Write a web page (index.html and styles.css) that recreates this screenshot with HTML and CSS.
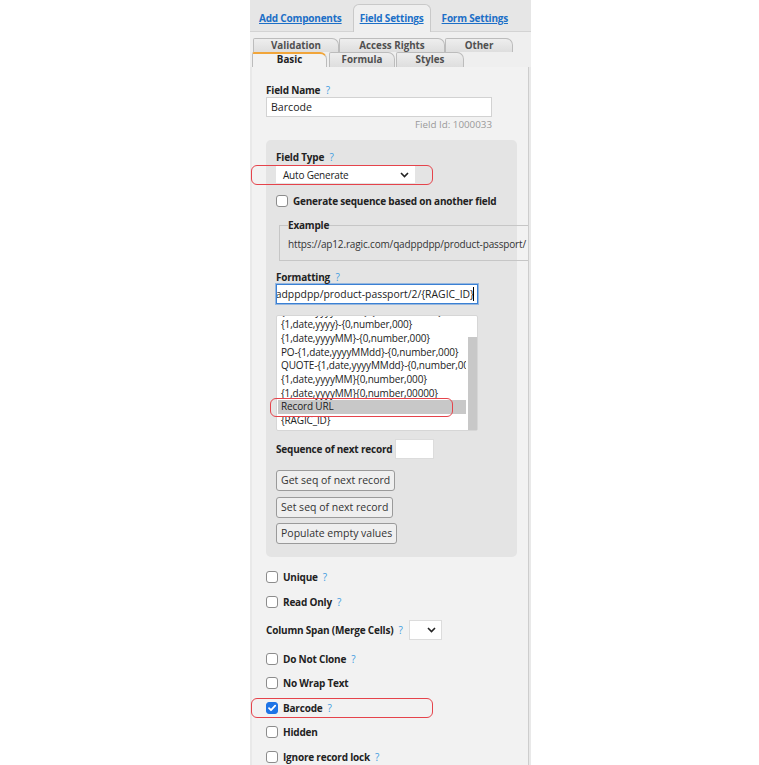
FILE: index.html
```html
<!DOCTYPE html>
<html>
<head>
<meta charset="utf-8">
<link rel="stylesheet" href="styles.css">
</head>
<body>
<div class="panel">
  <div class="topbar">
    <a class="toplink">Add Components</a>
    <a class="toptab active">Field Settings</a>
    <a class="toplink">Form Settings</a>
  </div>
  <div class="subtabs">
    <div class="row row1">
      <div class="tab w-val">Validation</div>
      <div class="tab w-acc">Access Rights</div>
      <div class="tab w-oth">Other</div>
    </div>
    <div class="row row2">
      <div class="tab active w-bas">Basic</div>
      <div class="tab w-for">Formula</div>
      <div class="tab w-sty">Styles</div>
    </div>
  </div>
  <div class="content">
    <div class="label">Field Name <span class="help">?</span></div>
    <div class="input name">Barcode</div>
    <div class="fieldid">Field Id: 1000033</div>

    <div class="box">
      <div class="label">Field Type <span class="help">?</span></div>
      <div class="select type">
        <span>Auto Generate</span>
        <svg width="9" height="6" viewBox="0 0 9 6"><path d="M1 1l3.5 3.5L8 1" fill="none" stroke="#222" stroke-width="1.6"/></svg>
      </div>
      <div class="check-row gen">
        <span class="cb"></span>
        <span class="clabel">Generate sequence based on another field</span>
      </div>
      <fieldset class="example">
        <legend>Example</legend>
        <div class="extext">https://ap12.ragic.com/qadppdpp/product-passport/</div>
      </fieldset>
      <div class="label fmt">Formatting <span class="help">?</span></div>
      <div class="input focus"><span class="ftext">https://ap12.ragic.com/qadppdpp/product-passport/2/{RAGIC_ID}</span><span class="caret"></span></div>
      <div class="list">
        <div class="list-items">
          <div class="list-scroll">
            <div class="item">{1,date,yyyyMMdd}-{0,number,000}</div>
            <div class="item">{1,date,yyyy}-{0,number,000}</div>
            <div class="item">{1,date,yyyyMM}-{0,number,000}</div>
            <div class="item">PO-{1,date,yyyyMMdd}-{0,number,000}</div>
            <div class="item">QUOTE-{1,date,yyyyMMdd}-{0,number,000}</div>
            <div class="item">{1,date,yyyyMM}{0,number,000}</div>
            <div class="item">{1,date,yyyyMM}{0,number,00000}</div>
            <div class="item selected">Record URL</div>
            <div class="item">{RAGIC_ID}</div>
          </div>
        </div>
        <div class="list-bar"><div class="thumb"></div></div>
      </div>
      <div class="seq-row">
        <span class="clabel">Sequence of next record</span>
        <span class="input seq"></span>
      </div>
      <div class="btn b1">Get seq of next record</div>
      <div class="btn b2">Set seq of next record</div>
      <div class="btn b3">Populate empty values</div>
    </div>

    <div class="check-row opt first"><span class="cb"></span><span class="clabel">Unique</span><span class="help">?</span></div>
    <div class="check-row opt"><span class="cb"></span><span class="clabel">Read Only</span><span class="help">?</span></div>
    <div class="span-row opt"><span class="clabel">Column Span (Merge Cells)</span><span class="help">?</span>
      <div class="select span">
        <svg width="9" height="6" viewBox="0 0 9 6"><path d="M1 1l3.5 3.5L8 1" fill="none" stroke="#222" stroke-width="1.6"/></svg>
      </div>
    </div>
    <div class="check-row opt wide"><span class="cb"></span><span class="clabel">Do Not Clone</span><span class="help">?</span></div>
    <div class="check-row opt tight"><span class="cb"></span><span class="clabel">No Wrap Text</span></div>
    <div class="check-row opt"><span class="cb checked"><svg width="10" height="10" viewBox="0 0 10 10"><path d="M2 5.2l2 2L8.2 2.6" fill="none" stroke="#fff" stroke-width="1.8" stroke-linecap="round" stroke-linejoin="round"/></svg></span><span class="clabel">Barcode</span><span class="help">?</span></div>
    <div class="check-row opt tight"><span class="cb"></span><span class="clabel">Hidden</span></div>
    <div class="check-row opt"><span class="cb"></span><span class="clabel">Ignore record lock</span><span class="help">?</span></div>
  </div>
</div>

<div class="mark m1"></div>
<div class="mark m2"></div>
<div class="mark m3"></div>
</body>
</html>
```

FILE: styles.css
```css
html, body {
  margin: 0;
  padding: 0;
  background: #ffffff;
}
body {
  width: 759px;
  height: 765px;
  overflow: hidden;
  position: relative;
  font-family: "Open Sans", "Liberation Sans", sans-serif;
  color: #222;
}
.panel {
  margin-left: 250px;
  width: 281px;
  height: 765px;
  background: #e9e9e9;
  overflow: hidden;
}
.topbar {
  height: 31px;
  background: #e6e6e6;
  border-bottom: 1px solid #d3d3d3;
  display: flex;
  align-items: flex-end;
  padding-left: 9px;
}
.toplink, .toptab {
  font-size: 10px;
  letter-spacing: -0.2px;
  font-weight: 700;
  color: #1c6fc7;
  text-decoration: underline;
  height: 26px;
  line-height: 26px;
  white-space: nowrap;
}
.toptab.active {
  margin-left: 11px;
  margin-right: 11px;
  padding: 0 6px;
  background: #efefef;
  border: 1px solid #c9c9c9;
  border-bottom: none;
  border-radius: 6px 6px 0 0;
  margin-bottom: -1px;
  height: 27px;
  line-height: 27px;
}
.subtabs {
  background: #efefef;
  padding-top: 6px;
}
.row {
  display: flex;
}
.row1 {
  margin-left: 3px;
  height: 14px;
}
.row2 {
  margin-left: 2px;
  height: 15px;
}
.tab {
  box-sizing: border-box;
  border: 1px solid #bcbcbc;
  border-bottom: none;
  border-radius: 2px 7px 0 0;
  background: linear-gradient(#eeeeee, #dedede);
  font-size: 9.8px;
  font-weight: 700;
  color: #505050;
  text-align: center;
  line-height: 13px;
  white-space: nowrap;
}
.row2 .tab {
  line-height: 14px;
}
.w-val { width: 86px; }
.w-acc { width: 106px; }
.w-oth { width: 68px; }
.w-bas { width: 75px; }
.w-for { width: 66px; margin-left: 2px; }
.w-sty { width: 68px; margin-left: 1px; }
.tab.active {
  background: #f2f2f2;
  border-top: 2px solid #f1a53a;
  color: #222;
  line-height: 12px;
}
.content {
  margin-left: 2px;
  width: 262px;
  height: 700px;
  background: #f2f2f2;
  border-right: 1px solid #cdcdcd;
  padding: 16px 0 0 14px;
  overflow: hidden;
}
.label {
  font-size: 10px;
  letter-spacing: -0.2px;
  font-weight: 700;
  line-height: 14px;
}
.help {
  font-size: 10px;
  font-weight: 400;
  letter-spacing: 0;
  color: #3f9ce0;
  margin-left: 3px;
}
.input {
  box-sizing: border-box;
  background: #fff;
  border: 1px solid #d2d2d2;
  font-size: 10.6px;
  line-height: 18px;
  padding: 0 4px;
}
.input.name {
  width: 226px;
  height: 20px;
}
.fieldid {
  width: 226px;
  text-align: right;
  font-size: 9.8px;
  line-height: 14px;
  color: #9a9a9a;
  margin-top: 1px;
}
.box {
  margin-top: 8px;
  width: 251px;
  box-sizing: border-box;
  background: #e4e4e4;
  border-radius: 5px;
  padding: 10px 10px 13px 10px;
}
.select {
  box-sizing: border-box;
  background: #fff;
  display: flex;
  align-items: center;
  justify-content: space-between;
  font-size: 10px;
  letter-spacing: -0.2px;
}
.select.type {
  margin-top: 2px;
  width: 139px;
  height: 17px;
  padding: 0 6px 0 7px;
}
.check-row {
  display: flex;
  align-items: center;
  height: 14px;
}
.cb {
  box-sizing: border-box;
  width: 12px;
  height: 12px;
  border: 1px solid #8c8c8c;
  border-radius: 3px;
  background: #fff;
  margin-right: 5px;
  flex: none;
  display: flex;
  align-items: center;
  justify-content: center;
}
.cb.checked {
  background: #1e74e6;
  border-color: #1e74e6;
}
.clabel {
  font-size: 10px;
  letter-spacing: -0.2px;
  font-weight: 700;
  line-height: 14px;
  white-space: nowrap;
}
.check-row.gen {
  margin-top: 11px;
}
.example {
  margin: 10px 0 0 3px;
  padding: 0 8px 9px 8px;
  width: 254px;
  box-sizing: border-box;
  border: 1px solid #c6c6c6;
  min-width: 0;
}
.example legend {
  padding: 0;
  font-size: 10px;
  letter-spacing: -0.2px;
  font-weight: 700;
  line-height: 14px;
}
.extext {
  margin-top: 5px;
  font-size: 10px;
  letter-spacing: -0.15px;
  line-height: 14px;
  white-space: nowrap;
  color: #333;
}
.label.fmt {
  margin-top: 9px;
}
.input.focus {
  width: 202px;
  height: 20px;
  border: 1px solid #3a80d4;
  box-shadow: 0 0 0 1px rgba(58, 128, 212, 0.45);
  display: flex;
  justify-content: flex-end;
  align-items: center;
  overflow: hidden;
  padding: 0 3px;
  white-space: nowrap;
  font-size: 10.4px;
}
.caret {
  display: inline-block;
  width: 1px;
  height: 14px;
  background: #000;
  margin-left: -1px;
  flex: none;
}
.list {
  margin-top: 11px;
  width: 202px;
  height: 116px;
  box-sizing: border-box;
  border: 1px solid #d6d6d6;
  border-radius: 2px;
  background: #fff;
  display: flex;
}
.list-items {
  flex: 1;
  overflow: hidden;
  padding-left: 1px;
}
.list-scroll {
  margin-top: -11.5px;
}
.item {
  font-size: 10px;
  letter-spacing: -0.15px;
  line-height: 13.7px;
  padding-left: 3px;
  white-space: nowrap;
  color: #222;
}
.item.selected {
  background: #c8c8c8;
}
.list-bar {
  width: 9px;
  margin-left: 2px;
  padding-top: 21px;
  display: flex;
  flex-direction: column;
}
.thumb {
  flex: 1;
  background: #c8c8c8;
}
.seq-row {
  margin-top: 8px;
  display: flex;
  align-items: center;
  gap: 3px;
}
.input.seq {
  width: 39px;
  height: 20px;
  border-color: #dcdcdc;
}
.btn {
  display: table;
  box-sizing: border-box;
  height: 21px;
  padding: 0 4px;
  border: 1px solid #9a9a9a;
  border-radius: 3px;
  background: #efefef;
  font-size: 10.5px;
  line-height: 19px;
  color: #333;
  white-space: nowrap;
}
.btn.b1 { margin-top: 11px; }
.btn.b2 { margin-top: 6px; }
.btn.b3 { margin-top: 5px; }
.opt {
  margin-top: 11px;
}
.opt.first {
  margin-top: 13px;
}
.opt.wide {
  margin-top: 12px;
}
.opt.tight {
  margin-top: 10px;
}
.opt .help {
  margin-left: 5px;
}
.span-row {
  display: flex;
  align-items: center;
  height: 20px;
}
.select.span {
  margin-left: 6px;
  width: 33px;
  height: 20px;
  border: 1px solid #dcdcdc;
  justify-content: flex-end;
  padding-right: 5px;
}
.mark {
  position: absolute;
  box-sizing: border-box;
  border: 1.5px solid #e5434b;
  border-radius: 6px;
}
.m1 { left: 251px; top: 165px; width: 182px; height: 20px; }
.m2 { left: 270px; top: 398px; width: 183px; height: 19px; }
.m3 { left: 251px; top: 698px; width: 182px; height: 20px; }
```
